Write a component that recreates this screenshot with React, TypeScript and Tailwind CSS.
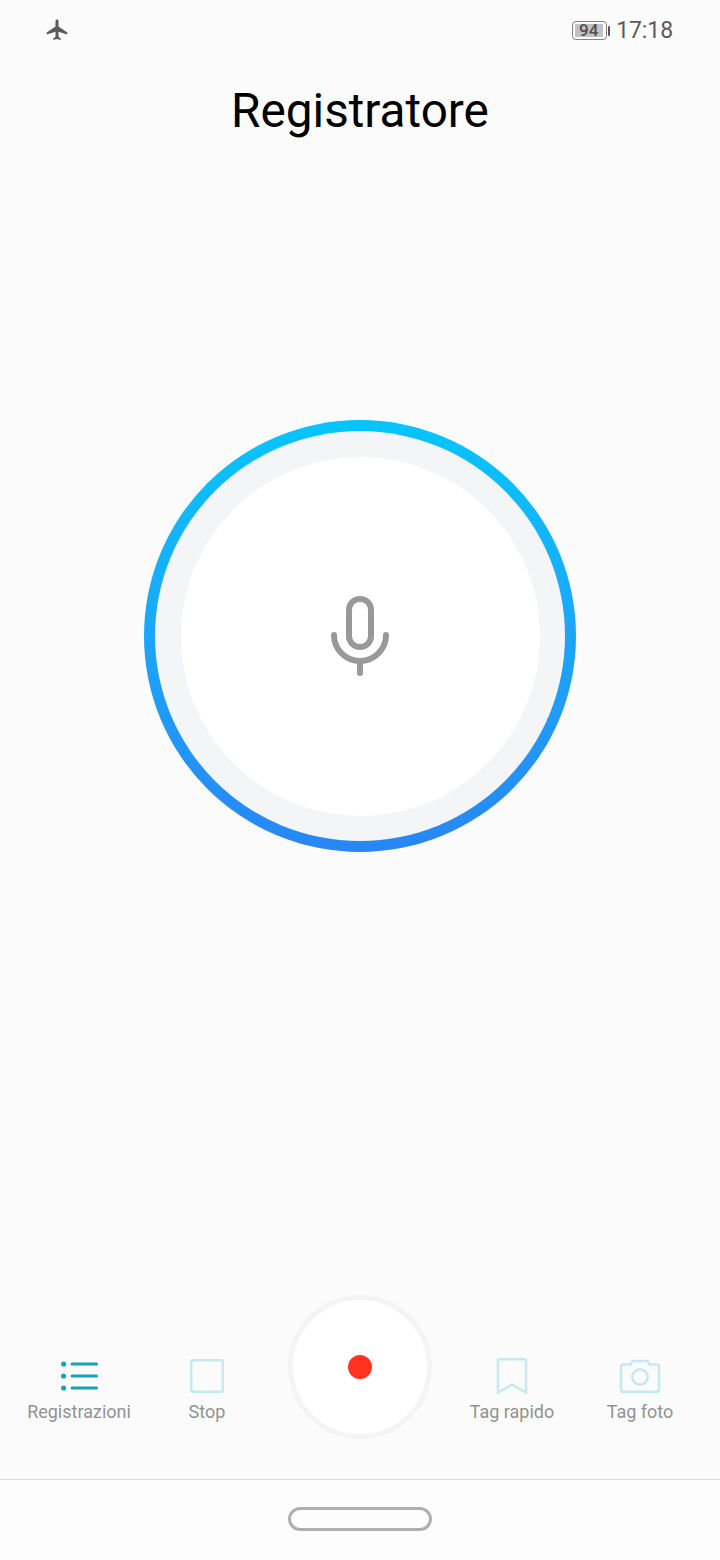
import type { ReactNode } from "react";

const StatusBar = () => {
  return (
    <div className="flex h-15 items-center justify-between pt-px pl-[46px] pr-[47px]">
      <svg className="-mt-px h-[22px] w-[22px] text-[#5b5b5b]" viewBox="0 0 22 22" fill="currentColor">
        <path d="M11 0.6C10.1 0.6 9.5 1.3 9.5 2.2V7.6L0.7 13.4V15.4L9.5 12.7V17.7L7.3 19.5V21L11 20L14.7 21V19.5L12.5 17.7V12.7L21.3 15.4V13.4L12.5 7.6V2.2C12.5 1.3 11.9 0.6 11 0.6Z" />
      </svg>
      <div className="flex items-center">
        <div className="flex h-[19px] w-[35px] items-center rounded border border-[#858585] p-0.5">
          <div className="flex h-full w-[28px] items-center justify-center bg-[#c2c2c2] text-[17px] leading-none font-medium text-[#505050]">
            94
          </div>
        </div>
        <div className="ml-px h-2.5 w-[2.5px] rounded-sm bg-[#555555]" />
        <span className="ml-[6px] pt-px text-[23px] leading-7 tracking-[-0.1px] text-[#5b5b5b]">17:18</span>
      </div>
    </div>
  );
};

const MicDial = () => {
  return (
    <div className="h-[432px] w-[432px] rounded-full bg-linear-to-b from-[#05c5fc] to-[#2886f4] p-[11px]">
      <div className="flex h-full items-center justify-center rounded-full bg-[#f3f5f7]">
        <div className="flex h-[359px] w-[359px] items-center justify-center rounded-full bg-white">
          <svg
            className="h-20 w-[58px]"
            viewBox="0 0 58 80"
            fill="none"
            stroke="#999999"
            strokeWidth="6"
            strokeLinecap="round"
          >
            <rect x="18" y="3" width="22" height="48" rx="11" />
            <path d="M3 39a26 26 0 0 0 52 0M29 65v12" />
          </svg>
        </div>
      </div>
    </div>
  );
};

const Tool = ({ label, children }: { label: string; children: ReactNode }) => {
  return (
    <button className="mt-[61px] flex flex-col items-center">
      <svg className="h-10 w-11" viewBox="0 0 44 40" fill="none">
        {children}
      </svg>
      <span className="mt-1 text-[18px] leading-6 whitespace-nowrap text-[#929292]">{label}</span>
    </button>
  );
};

export default function App() {
  return (
    <div className="flex h-[1560px] w-[720px] flex-col bg-[#fbfbfb] font-['Roboto',sans-serif]">
      <StatusBar />
      <h1 className="mt-[23px] text-center text-[47.7px] leading-14 text-black">Registratore</h1>

      <main className="mt-[281px] flex flex-1 flex-col items-center">
        <MicDial />
      </main>

      <div className="grid h-[184px] grid-cols-[128px_128px_177px_128px_128px] items-start pl-[15px]">
        <Tool label="Registrazioni">
          <g fill="#15a3b5">
            <circle cx="6.6" cy="8" r="2.6" />
            <circle cx="6.6" cy="20" r="2.6" />
            <circle cx="6.6" cy="32" r="2.6" />
          </g>
          <path d="M15 8h24.5M15 20h24.5M15 32h24.5" stroke="#15a3b5" strokeWidth="3" strokeLinecap="round" />
        </Tool>
        <Tool label="Stop">
          <rect x="6.2" y="4.2" width="31.6" height="31.6" rx="2" stroke="#c4e9ee" strokeWidth="2.5" />
        </Tool>
        <button className="ml-px flex h-36 w-36 items-center justify-center justify-self-center rounded-full border-[5px] border-[#f4f4f4] bg-white">
          <span className="h-6 w-6 rounded-full bg-[#ff3320]" />
        </button>
        <Tool label="Tag rapido">
          <path
            d="M9.5 3.2h25a1.5 1.5 0 0 1 1.5 1.5v31.8l-14-7.8-14 7.8V4.7a1.5 1.5 0 0 1 1.5-1.5Z"
            stroke="#c4e9ee"
            strokeWidth="2.5"
            strokeLinejoin="round"
          />
        </Tool>
        <Tool label="Tag foto">
          <path
            d="M5 8.5h7.5l2.2-3.5H29.3L31.5 8.5H39a2 2 0 0 1 2 2v23.3a2 2 0 0 1-2 2H5a2 2 0 0 1-2-2V10.5a2 2 0 0 1 2-2Z"
            stroke="#c4e9ee"
            strokeWidth="2.5"
            strokeLinejoin="round"
          />
          <circle cx="22" cy="21" r="7.7" stroke="#c4e9ee" strokeWidth="2.5" />
        </Tool>
      </div>

      <nav className="flex h-[81px] items-center justify-center border-t border-[#dedede] bg-[#fdfdfd] pb-0.5">
        <div className="h-6 w-36 rounded-full border-[3px] border-[#b0b0b0]" />
      </nav>
    </div>
  );
}
